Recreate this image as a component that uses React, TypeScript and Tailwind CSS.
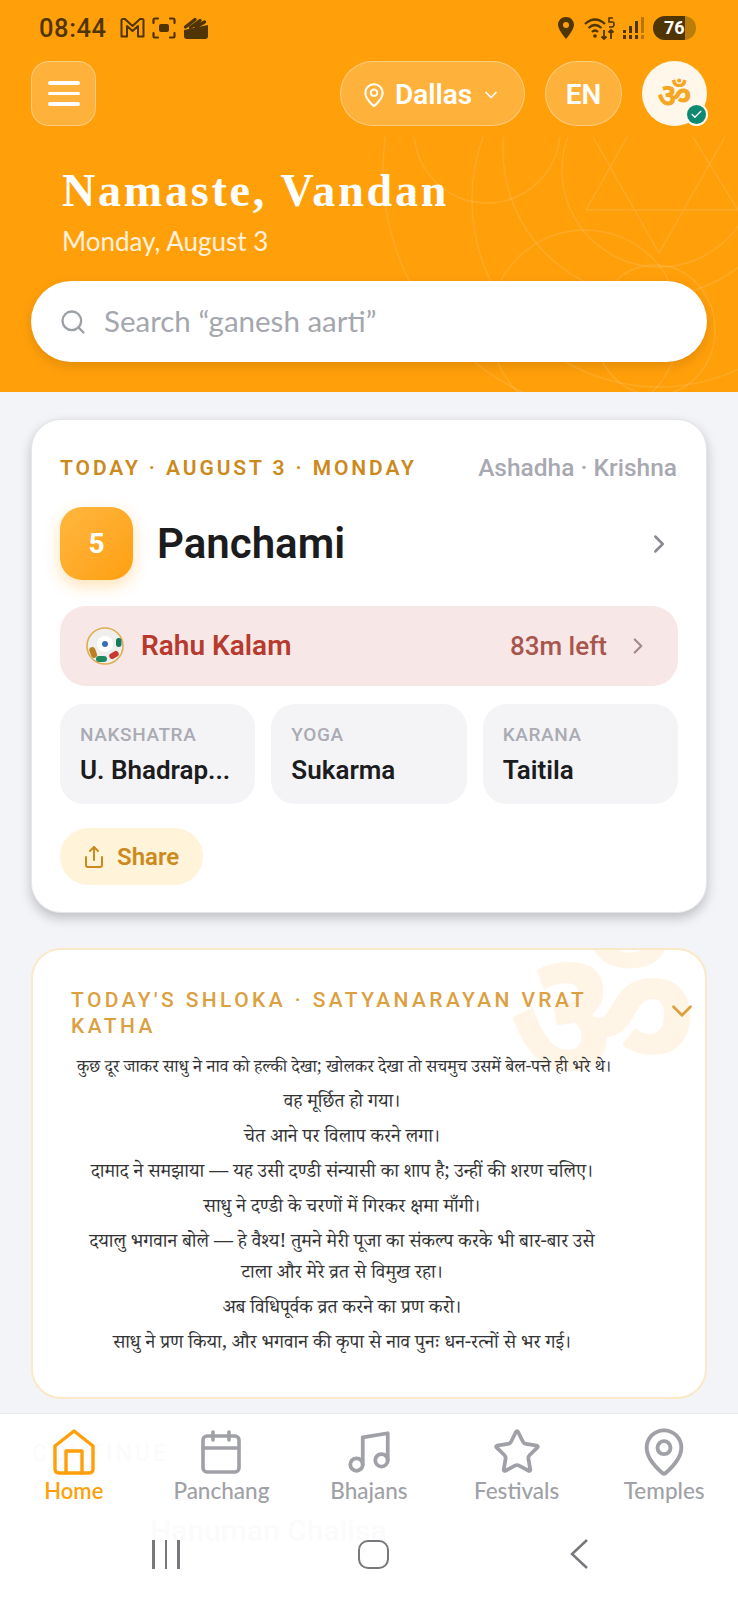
import { Calendar, Check, ChevronDown, ChevronRight, MapPin, Music, Search, Share, Star } from 'lucide-react';

const shlokaLines = [
  'वह मूर्छित हो गया।',
  'चेत आने पर विलाप करने लगा।',
  'दामाद ने समझाया — यह उसी दण्डी संन्यासी का शाप है; उन्हीं की शरण चलिए।',
  'साधु ने दण्डी के चरणों में गिरकर क्षमा माँगी।',
  'दयालु भगवान बोले — हे वैश्य! तुमने मेरी पूजा का संकल्प करके भी बार-बार उसे टाला और मेरे व्रत से विमुख रहा।',
  'अब विधिपूर्वक व्रत करने का प्रण करो।',
  'साधु ने प्रण किया, और भगवान की कृपा से नाव पुनः धन-रत्नों से भर गई।',
];

const tiles = [
  { label: 'NAKSHATRA', value: 'U. Bhadrap...' },
  { label: 'YOGA', value: 'Sukarma' },
  { label: 'KARANA', value: 'Taitila' },
];

function HomeIcon() {
  return (
    <svg width="42" height="46" viewBox="0 0 42 46" fill="none" stroke="#ff9f0a" strokeWidth="3.4" strokeLinejoin="round" strokeLinecap="round">
      <path d="M21 2 L40 17 V40 Q40 44 36 44 H6 Q2 44 2 40 V17 Z" />
      <path d="M13 44 V22 H29 V44" />
    </svg>
  );
}

function StatusLeftIcons() {
  return (
    <div className="flex items-center ml-[13px] gap-[7px]">
      <svg width="25" height="20" viewBox="0 0 25 20" fill="none" stroke="#4f3503" strokeWidth="2">
        <path d="M1.5 18.5 V2 Q1.5 1 3 1 H5 L12.5 8 L20 1 H22 Q23.5 1 23.5 2 V18.5 H18 V8 L12.5 13 L7 8 V18.5 Z" strokeLinejoin="round" />
      </svg>
      <svg width="24" height="22" viewBox="0 0 24 22" fill="none" stroke="#4f3503" strokeWidth="2.2" strokeLinecap="round">
        <path d="M1.5 6 V3 Q1.5 1.5 3 1.5 H6 M18 1.5 H21 Q22.5 1.5 22.5 3 V6 M22.5 16 V19 Q22.5 20.5 21 20.5 H18 M6 20.5 H3 Q1.5 20.5 1.5 19 V16" />
        <rect x="7" y="7" width="10" height="8" rx="2" fill="#4f3503" stroke="none" />
      </svg>
      <svg width="26" height="22" viewBox="0 0 26 22" fill="none">
        <path d="M1 13 L25 8 V19 Q25 22 22 22 H4 Q1 22 1 19 Z" fill="#4f3503" />
        <path d="M2.5 10 L12 2.5 M7.5 10.5 L17 3.5 M13 10 L21.5 5" stroke="#4f3503" strokeWidth="3.4" strokeLinecap="round" />
      </svg>
    </div>
  );
}

function StatusRightIcons() {
  return (
    <div className="flex items-center">
      <svg width="16" height="22" viewBox="0 0 16 22" className="mr-[10px]">
        <path fillRule="evenodd" fill="#4f3503" d="M8 0 C3.5 0 0 3.4 0 7.8 C0 13 8 22 8 22 C8 22 16 13 16 7.8 C16 3.4 12.5 0 8 0 Z M8 5 A3 3 0 1 1 8 11 A3 3 0 1 1 8 5 Z" />
      </svg>
      <svg width="32" height="24" viewBox="0 0 32 24" fill="none" stroke="#4f3503" strokeWidth="2.2" className="mr-[6px]">
        <path d="M1 8 Q11 -1 21 8" />
        <path d="M4.5 12 Q11 6 17.5 12" />
        <path d="M8 16 Q11 13 14 16" />
        <circle cx="11" cy="20" r="1.8" fill="#4f3503" stroke="none" />
        <path d="M20 14 V23 M17.5 20.5 L20 23 L22.5 20.5 M27 23 V14 M24.5 16.5 L27 14 L29.5 16.5" strokeWidth="1.8" />
        <path d="M29 2 H25 V6 H28.5 Q30 6 30 8 Q30 11 28 11 H25" strokeWidth="1.6" />
      </svg>
      <svg width="23" height="24" viewBox="0 0 23 24" fill="#4f3503" className="mr-[8px]">
        <rect x="1" y="14" width="3" height="3" />
        <rect x="1" y="19" width="3" height="4" />
        <rect x="7" y="10" width="3" height="7" />
        <rect x="7" y="19" width="3" height="4" />
        <rect x="13" y="5" width="3" height="12" />
        <rect x="13" y="19" width="3" height="4" />
        <rect x="19" y="1" width="3" height="16" opacity="0.4" />
        <rect x="19" y="19" width="3" height="4" opacity="0.4" />
      </svg>
      <div className="relative w-[43px] h-[24px] rounded-full overflow-hidden bg-[#b97e0a]">
        <div className="absolute left-0 top-0 bottom-0 w-[32px] bg-[#4f3503]" />
        <span className="absolute left-[11px] top-0 leading-[24px] text-[18px] font-bold text-[#fff]">76</span>
      </div>
    </div>
  );
}

// faint mandala lines behind the greeting
function Mandala() {
  return (
    <svg className="absolute left-0 top-[137px] pointer-events-none" width="738" height="255" viewBox="0 137 738 255" fill="none" stroke="#ffffff" strokeOpacity="0.12" strokeWidth="1.5">
      <circle cx="630" cy="170" r="247" />
      <circle cx="650" cy="150" r="147" />
      <circle cx="659" cy="170" r="97" />
      <circle cx="487" cy="130" r="73" />
      <ellipse cx="585" cy="325" rx="95" ry="95" />
      <ellipse cx="655" cy="330" rx="60" ry="65" />
      <circle cx="659" cy="200" r="187" />
      <path d="M586 210 H738 M593 137 L659 253 L725 137 M586 210 L627 137 M738 210 L693 137" />
    </svg>
  );
}

function RahuIcon() {
  return (
    <svg width="38" height="38" viewBox="0 0 38 38">
      <circle cx="19" cy="19" r="18" fill="#f1efee" stroke="#dcae55" strokeWidth="1.6" />
      <circle cx="19" cy="17" r="8" fill="#ffffff" />
      <circle cx="19" cy="17" r="3" fill="#3b6fb5" />
      <rect x="30" y="11" width="5.5" height="9" rx="2.7" fill="#177a5c" />
      <rect x="4" y="20" width="6" height="11" rx="3" fill="#bd7f1f" transform="rotate(-20 7 25)" />
      <rect x="10" y="29" width="11" height="6" rx="3" fill="#1d8a5f" />
      <rect x="23" y="25" width="10" height="6" rx="3" fill="#c6392c" transform="rotate(-30 28 28)" />
    </svg>
  );
}

export default function App() {
  return (
    <div className="relative w-[738px] h-[1600px] overflow-hidden bg-[#f3f4f8] font-['Roboto',sans-serif]">
      {/* Header */}
      <div className="relative h-[392px] bg-[#ff9f0a] px-[31px]">
        <Mandala />
        <div className="relative flex items-center justify-between h-[56px] pl-[8px] pr-[11px]">
          <div className="flex items-center">
            <span className="text-[25.5px] font-medium tracking-[0.6px] text-[#4f3503]">08:44</span>
            <StatusLeftIcons />
          </div>
          <StatusRightIcons />
        </div>

        <div className="relative flex items-center mt-[5px]">
          <button className="flex flex-col items-center justify-center gap-[7px] w-[65px] h-[65px] rounded-[18px] bg-white/20 border border-white/35">
            <span className="w-[32px] h-[3.5px] rounded-full bg-white" />
            <span className="w-[32px] h-[3.5px] rounded-full bg-white" />
            <span className="w-[32px] h-[3.5px] rounded-full bg-white" />
          </button>
          <div className="flex-1" />
          <button className="flex items-center w-[185px] h-[65px] pl-[20px] pt-[2px] rounded-full bg-white/20 border border-white/35 text-white">
            <MapPin size={26} strokeWidth={1.9} />
            <span className="ml-[8px] text-[28px] font-semibold">Dallas</span>
            <ChevronDown size={20} strokeWidth={2} className="ml-[9px]" />
          </button>
          <button className="w-[77px] h-[65px] ml-[20px] pt-[2px] rounded-full bg-white/20 border border-white/35 text-white text-[28px] font-semibold">EN</button>
          <div className="relative flex items-center justify-center w-[65px] h-[65px] ml-[20px] rounded-full bg-[#fff8ea]">
            <span className="text-[34px] font-bold leading-none text-[#f5a623] font-['Noto_Sans','Noto_Sans_Devanagari',sans-serif]">ॐ</span>
            <div className="absolute right-[-1px] bottom-[0px] flex items-center justify-center w-[23px] h-[23px] rounded-full bg-[#0f8a72] border-2 border-[#fff8ea]">
              <Check size={13} strokeWidth={2.5} className="text-white" />
            </div>
          </div>
        </div>

        <div className="relative ml-[31px] mt-[40px] text-[46px] leading-[50px] font-bold tracking-[2.8px] text-white font-['Liberation_Serif',serif]">Namaste, Vandan</div>
        <div className="relative ml-[31px] mt-[9px] text-[26px] leading-[32px] text-white/85 font-['Lato',sans-serif]">Monday, August 3</div>

        <div className="relative flex items-center h-[81px] mt-[24px] pl-[28px] rounded-full bg-white shadow-[0_4px_12px_rgba(0,0,0,0.12)]">
          <Search size={28} strokeWidth={2} className="text-[#9ca0a6]" />
          <span className="ml-[17px] text-[29.5px] text-[#a4a7ad] font-['Lato',sans-serif]">Search “ganesh aarti”</span>
        </div>
      </div>

      {/* Panchang card */}
      <div className="mx-[31px] mt-[27px] h-[494px] px-[28px] rounded-[30px] bg-white border border-[#e6e6ea] shadow-[0_5px_12px_rgba(0,0,0,0.22)]">
        <div className="flex items-center justify-between h-[48px] mt-[24px]">
          <span className="pt-[1px] text-[21px] font-semibold tracking-[2.9px] text-[#cc8a1c]">TODAY · AUGUST 3 · MONDAY</span>
          <span className="mr-[1px] text-[24.5px] font-medium text-[#a8a9b0]">Ashadha · Krishna</span>
        </div>
        <div className="flex items-center mt-[15px]">
          <div className="flex items-center justify-center w-[73px] h-[73px] rounded-[22px] bg-gradient-to-br from-[#ffb73d] to-[#ff9f0a] text-white text-[28px] font-bold shadow-[0_6px_16px_rgba(255,159,10,0.3)]">5</div>
          <span className="ml-[24px] text-[42px] font-semibold text-[#1c1c1e]">Panchami</span>
          <ChevronRight size={30} strokeWidth={2} className="ml-auto mr-[4px] text-[#8a8b90]" />
        </div>
        <div className="flex items-center h-[80px] mt-[26px] pl-[26px] pr-[27px] rounded-[26px] bg-[#f7e7e6]">
          <RahuIcon />
          <span className="ml-[17px] text-[28px] font-semibold text-[#b83a2e]">Rahu Kalam</span>
          <span className="ml-auto text-[26px] font-medium text-[#a8554e]">83m left</span>
          <ChevronRight size={26} strokeWidth={2} className="ml-[18px] text-[#a08a88]" />
        </div>
        <div className="grid grid-cols-3 gap-[16px] mt-[18px]">
          {tiles.map((tile) => (
            <div key={tile.label} className="h-[100px] pl-[20px] pt-[20px] rounded-[24px] bg-[#f4f4f7]">
              <div className="text-[19px] leading-[22px] font-medium tracking-[0.6px] text-[#aaabb3]">{tile.label}</div>
              <div className="mt-[8px] text-[26px] leading-[32px] font-semibold text-[#1c1c1e]">{tile.value}</div>
            </div>
          ))}
        </div>
        <button className="flex items-center w-[143px] h-[57px] mt-[24px] pl-[22px] rounded-full bg-[#fff3d9] text-[#cc8a1c]">
          <Share size={24} strokeWidth={2} />
          <span className="ml-[11px] text-[24px] font-semibold">Share</span>
        </button>
      </div>

      {/* Shloka card */}
      <div className="relative mx-[31px] mt-[35px] h-[451px] pl-[38px] pr-[93px] pt-[37px] rounded-[30px] bg-white border-2 border-[#fbe8c6] overflow-hidden">
        <span className="absolute right-[6px] top-[-36px] text-[187px] leading-none font-bold text-[#ff9f0a]/10 font-['Noto_Sans','Noto_Sans_Devanagari',serif]">ॐ</span>
        <ChevronDown size={34} strokeWidth={2} className="absolute right-[6px] top-[44px] text-[#dfa040]" />
        <div className="relative text-[21px] leading-[26px] font-medium tracking-[3.4px] text-[#dda040]">TODAY'S SHLOKA · SATYANARAYAN VRAT KATHA</div>
        <div className="relative mt-[15px] w-[530px] ml-[6px] text-center text-[19px] leading-[31px] text-[#333333] font-['Noto_Serif_Devanagari','Noto_Sans_Devanagari','Liberation_Serif',serif]">
          <p className="mb-[4px] text-[17.4px] whitespace-nowrap">कुछ दूर जाकर साधु ने नाव को हल्की देखा; खोलकर देखा तो सचमुच उसमें बेल-पत्ते ही भरे थे।</p>
          {shlokaLines.map((line) => (
            <p key={line} className="mb-[4px]">{line}</p>
          ))}
        </div>
      </div>

      <div className="mx-[32px] mt-[38px] text-[23px] font-medium tracking-[3.2px] text-[#8a8b90]">CONTINUE</div>
      <div className="ml-[150px] mt-[36px] text-[30px] font-medium text-[#1c1c1e]/60">Hanuman Chalisa</div>

      {/* Bottom nav, lies over the page */}
      <div className="absolute left-0 right-0 bottom-0 h-[187px] bg-white/[0.97] border-t border-[#ececee]">
        <div className="grid grid-cols-5 mt-[12px] font-['Lato',sans-serif]">
          <div className="flex flex-col items-center text-[#ff9f0a]">
            <div className="flex items-center justify-center h-[52px]"><HomeIcon /></div>
            <span className="-mt-[1px] text-[22px] leading-[28px] font-semibold">Home</span>
          </div>
          <div className="flex flex-col items-center text-[#a0a1a6]">
            <div className="flex items-center justify-center h-[52px]"><Calendar size={48} strokeWidth={1.8} /></div>
            <span className="-mt-[1px] text-[22.5px] leading-[28px] font-medium">Panchang</span>
          </div>
          <div className="flex flex-col items-center text-[#a0a1a6]">
            <div className="flex items-center justify-center h-[52px]"><Music size={50} strokeWidth={1.8} /></div>
            <span className="-mt-[1px] text-[22.5px] leading-[28px] font-medium">Bhajans</span>
          </div>
          <div className="flex flex-col items-center text-[#a0a1a6]">
            <div className="flex items-center justify-center h-[52px]"><Star size={50} strokeWidth={1.8} /></div>
            <span className="-mt-[1px] text-[22.5px] leading-[28px] font-medium">Festivals</span>
          </div>
          <div className="flex flex-col items-center text-[#a0a1a6]">
            <div className="flex items-center justify-center h-[52px]"><MapPin size={52} strokeWidth={1.8} /></div>
            <span className="-mt-[1px] text-[22.5px] leading-[28px] font-medium">Temples</span>
          </div>
        </div>

        {/* Android nav buttons */}
        <div className="absolute left-0 right-0 top-[125px] flex items-center justify-between pl-[152px] pr-[150px]">
          <div className="flex gap-[10px]">
            <span className="w-[2.5px] h-[29px] bg-[#77787c]" />
            <span className="w-[2.5px] h-[29px] bg-[#77787c]" />
            <span className="w-[2.5px] h-[29px] bg-[#77787c]" />
          </div>
          <div className="-ml-[2px] w-[31px] h-[29px] rounded-[10px] border-[2.5px] border-[#77787c]" />
          <svg width="18" height="30" viewBox="0 0 18 30" fill="none" stroke="#77787c" strokeWidth="2.5">
            <path d="M17 1 L2 15 L17 29" />
          </svg>
        </div>
      </div>
    </div>
  );
}
